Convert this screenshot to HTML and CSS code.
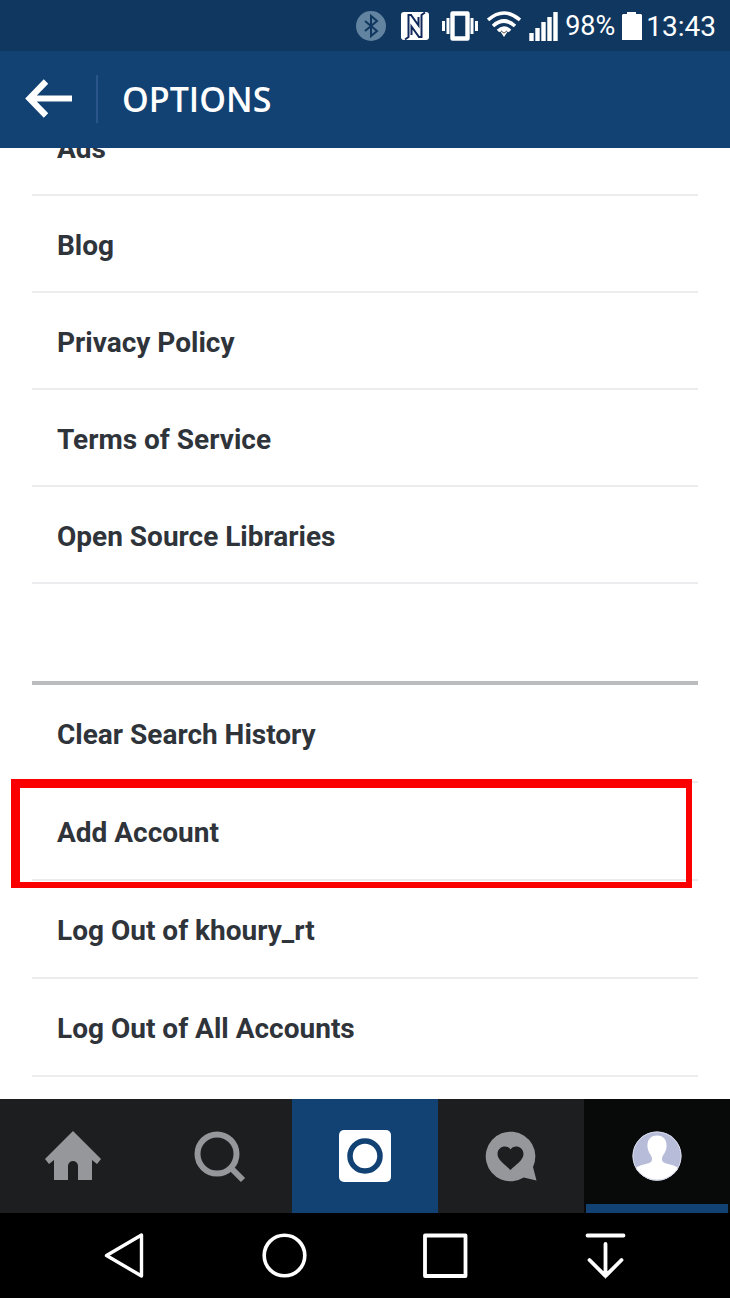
FILE: index.html
```html
<!DOCTYPE html>
<html lang="en">
<head>
<meta charset="utf-8">
<meta name="viewport" content="width=device-width, initial-scale=1">
<title>Options</title>
<link rel="stylesheet" href="styles.css">
</head>
<body class="screen">
<div class="status">
  <svg width="30" height="30" viewBox="0 0 30 30" aria-label="Bluetooth"><circle cx="15" cy="15" r="15" fill="#6284a0"/><path d="M9 10l12 10-6 5V5l6 5L9 20" fill="none" stroke="#10375f" stroke-width="2"/></svg>
  <svg class="gap-nfc" width="28" height="30" viewBox="0 0 28 30" aria-label="NFC"><rect y="1" width="28" height="28" rx="3" fill="#fff"/><path d="M4 28.500L7.500 26V4h2.500L17.500 14.500V6M24 1.500L20.500 4v22H18L10.500 15.500V24" fill="none" stroke="#10295a" stroke-width="2"/></svg>
  <svg class="gap-vib" width="38" height="30" viewBox="0 0 38 30" aria-label="Vibrate"><path d="M11.500 2.500h15v25h-15z" fill="none" stroke="#fff" stroke-width="4.400" stroke-linejoin="round"/><path d="M7 7v16M31 7v16" stroke="#fff" stroke-width="3"/><path d="M2.500 10v10M35.500 10v10" stroke="#fff" stroke-width="3"/></svg>
  <svg class="gap-wifi" width="34" height="30" viewBox="0 0 34 30" aria-label="Wi-Fi"><g fill="none" stroke="#fff" stroke-width="3.600"><path d="M1 9Q17-5 33 9"/><path d="M6 15q11-10 22 0"/><path d="M11 20q6-6 12 0"/></g><path d="M13 20q4-3 8 0l-4 6z" fill="#fff"/><path d="M14 20l3 2 3-2" fill="none" stroke="#555" stroke-width="1"/></svg>
  <svg class="gap-signal" width="30" height="30" viewBox="0 0 30 30" aria-label="Signal"><path d="M2.500 30v-8M8.500 30V17M14.500 30V11M20.500 30V6M26.500 30V1" stroke="#fff" stroke-width="4.400"/></svg>
  <span class="percent">98%</span>
  <svg class="gap-battery" width="20" height="30" viewBox="0 0 20 30" aria-label="Battery"><path d="M5 1h9v2h5l1 1v25H0V4l1-1h4z" fill="#fff"/></svg>
  <time class="clock">13:43</time>
</div>
<header class="header">
  <button class="back" aria-label="Back"><svg width="48" height="40" viewBox="0 0 48 40"><path d="M6 19.500h42M22 2.500L5.500 19.500 22 36.500" fill="none" stroke="#fff" stroke-width="6.200"/></svg></button>
  <h1 class="title">OPTIONS</h1>
</header>
<main class="content">
  <ul class="list list-links">
    <li class="row"><a class="link" href="#ads">Ads</a></li>
    <li class="row"><a class="link" href="#blog">Blog</a></li>
    <li class="row"><a class="link" href="#privacy">Privacy Policy</a></li>
    <li class="row"><a class="link" href="#terms">Terms of Service</a></li>
    <li class="row"><a class="link" href="#libraries">Open Source Libraries</a></li>
  </ul>
  <ul class="list list-account">
    <li class="row"><a class="link" href="#clear">Clear Search History</a></li>
    <li class="row row-marked"><a class="link" href="#add">Add Account</a></li>
    <li class="row"><a class="link" href="#logout">Log Out of khoury_rt</a></li>
    <li class="row"><a class="link" href="#logout-all">Log Out of All Accounts</a></li>
  </ul>
</main>
<nav class="tabs">
  <a class="tab" href="#home" aria-label="Home"><svg width="56" height="56" viewBox="0 0 56 56"><path d="M28 3l28 28-4 5-5-4v20H33V38a5 5 0 0 0-10 0v14H9V32l-5 4-4-5z" fill="#96979b"/></svg></a>
  <a class="tab" href="#search" aria-label="Search"><svg width="56" height="56" viewBox="0 0 56 56"><circle cx="26" cy="26" r="19.500" fill="none" stroke="#96979b" stroke-width="6"/><path d="M39 39l13 13" stroke="#96979b" stroke-width="6"/></svg></a>
  <a class="tab tab-camera" href="#camera" aria-label="Camera"><svg width="56" height="56" viewBox="0 0 56 56"><rect x="2" y="2" width="52" height="52" rx="5" fill="#fff"/><circle cx="28" cy="28" r="15" fill="none" stroke="#114273" stroke-width="5.500"/></svg></a>
  <a class="tab" href="#activity" aria-label="Activity"><svg width="56" height="56" viewBox="0 0 56 56"><path d="M50 39l3.500 13.500L40.700 49.500A24.800 24.800 0 1 1 50 39z" fill="#96979b"/><path d="M27.500 42C22.500 37 14.500 32 14.500 26c0-8 10-10 13-4.500 3-5.500 13-3.500 13 4.500 0 6-8 11-13 16z" fill="#1d1e20"/></svg></a>
  <a class="tab tab-profile" href="#profile" aria-label="Profile"><svg width="56" height="56" viewBox="0 0 56 56"><defs><clipPath id="avatar"><circle cx="28" cy="28" r="24.500"/></clipPath></defs><circle cx="28" cy="28" r="24.500" fill="#b7bdd8"/><path clip-path="url(#avatar)" d="M28 7.500c7 0 10 5 9.500 11.500-.5 6-4.500 8-4.500 12 0 3 2 4 6 5 6 1 9 3 12 5v14H5V41c3-2 6-4 12-5 4-1 6-2 6-5 0-4-4-6-4.500-12C18 12.500 21 7.500 28 7.500z" fill="#fff"/><circle cx="28" cy="28" r="24" fill="none" stroke="#d5d8e8"/></svg></a>
</nav>
<nav class="system">
  <button class="key" aria-label="System back"><svg width="48" height="48" viewBox="0 0 48 48"><path d="M6.500 23.500L41.500 3v41z" fill="none" stroke="#fff" stroke-width="3.400" stroke-linejoin="round"/></svg></button>
  <button class="key" aria-label="System home"><svg width="48" height="48" viewBox="0 0 48 48"><circle cx="23.500" cy="23.500" r="20.300" fill="none" stroke="#fff" stroke-width="3.600"/></svg></button>
  <button class="key" aria-label="Recent apps"><svg width="48" height="48" viewBox="0 0 48 48"><rect x="4" y="3.500" width="40.500" height="40.500" fill="none" stroke="#fff" stroke-width="3.800" stroke-linejoin="round"/></svg></button>
  <button class="key" aria-label="Notifications"><svg width="48" height="48" viewBox="0 0 48 48"><path d="M5.500 3.500h36M23.500 12v32M7.500 28l16 16 16-16" fill="none" stroke="#fff" stroke-width="3.800" stroke-linecap="round"/></svg></button>
</nav>
</body>
</html>
```

FILE: styles.css
```css
* { box-sizing: border-box; }

.screen {
  margin: 0;
  height: 100vh;
  display: flex;
  flex-direction: column;
  background: #fff;
  font-family: Roboto, "Liberation Sans", sans-serif;
}

svg { display: block; flex: none; }

button {
  padding: 0;
  border: 0;
  background: none;
}

.status {
  flex: none;
  display: flex;
  align-items: center;
  justify-content: flex-end;
  height: 51px;
  padding: 1px 14px 0 0;
  background: #10375f;
  color: #fff;
}

.gap-nfc { margin-left: 15px; }
.gap-vib { margin-left: 12px; }
.gap-wifi { margin-left: 8px; }
.gap-signal { margin-left: 8px; }
.gap-battery { margin-left: 7px; }
.percent { margin-left: 6px; font-size: 27px; }
.clock { margin-left: 4px; font-size: 28px; }

.header {
  flex: none;
  display: flex;
  align-items: center;
  height: 97px;
  padding-bottom: 2px;
  background: #114273;
}

.back {
  display: flex;
  align-items: center;
  height: 48px;
  padding: 0 24px;
  border-right: 2px solid #29558a;
}

.title {
  margin: 0 0 0 24px;
  color: #fff;
  font: 600 34px "Open Sans", "Noto Sans", sans-serif;
}

.content {
  flex: 1;
  min-height: 0;
  padding: 0 32px;
  overflow-y: auto;
  scrollbar-width: none;
}

.list {
  margin: 0;
  padding: 0;
  list-style: none;
}

/* The list opens scrolled half a row down. */
.list-links { margin-top: -49px; }

.list-account {
  margin-top: 97px;
  border-top: 4px solid #bbbcbe;
}

.row {
  position: relative;
  height: 97px;
  border-bottom: 2px solid #ececee;
}

.list-account .row { height: 98px; }

.link {
  display: flex;
  align-items: center;
  height: 100%;
  padding: 3px 0 0 25px;
  color: #2f343b;
  font-size: 28px;
  font-weight: 700;
  text-decoration: none;
}

.row-marked::after {
  content: "";
  position: absolute;
  inset: -4px 6px -9px -21px;
  border: solid #fa0000;
  border-width: 9px 6px 6px 9px;
}

.tabs {
  flex: none;
  display: grid;
  grid-template-columns: repeat(5, 1fr);
  height: 114px;
  background: #1d1e20;
}

.tab {
  display: flex;
  align-items: center;
  justify-content: center;
}

.tab-camera { background: #114273; }

.tab-profile {
  position: relative;
  background: #080a09;
}

.tab-profile::after {
  content: "";
  position: absolute;
  inset: auto 2px 0;
  height: 9px;
  background: #114273;
}

.system {
  flex: none;
  display: grid;
  grid-template-columns: repeat(4, 1fr);
  height: 85px;
  padding: 0 44px;
  background: #000;
}

.key {
  display: flex;
  align-items: center;
  justify-content: center;
}
```
